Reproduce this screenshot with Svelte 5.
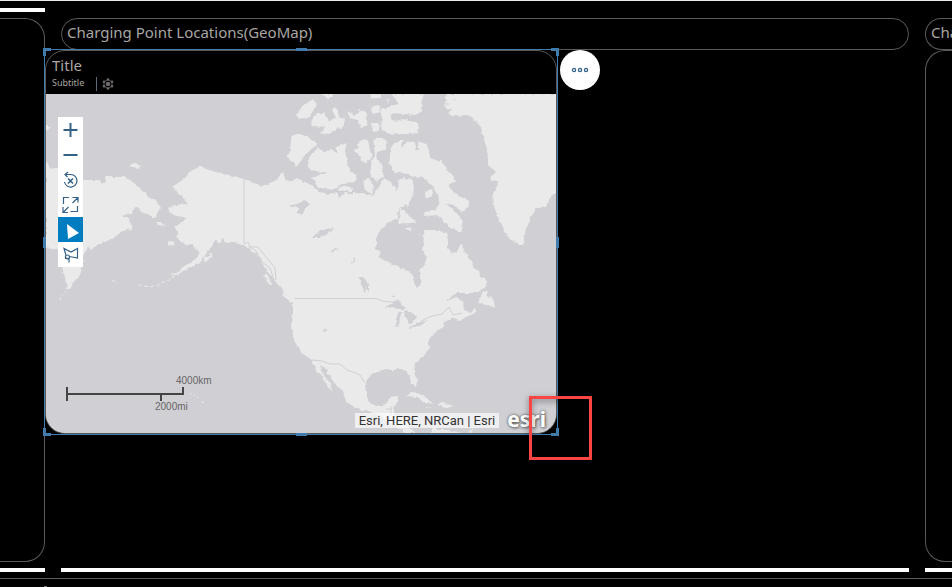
<script>
  let tool = $state('select');
  const handles = ['nw', 'n', 'ne', 'w', 'e', 'sw', 's', 'se'];
</script>

<div class="page">
  <main class="board">
    <section class="lane left" aria-label="Previous lane">
      <div class="bar"></div>
      <div class="panel"></div>
    </section>

    <section class="lane middle">
      <h1 class="pill">Charging Point Locations(GeoMap)</h1>
      <article class="selection">
        <div class="card">
          <header>
            <h2>Title</h2>
            <div class="sub">
              <span>Subtitle</span>
              <i class="rule"></i>
              <svg width="12" height="12" viewBox="0 0 12 12" fill="#6c6a69">
                <path d="M6 1.500 10 3.800v4.500L6 10.500 2 8.300V3.800Z" fill="none" stroke="#5a5857" />
                <circle cx="6" cy="6" r="2.300" /><circle cx="6" cy="1.500" r="1.300" /><circle cx="6" cy="10.500" r="1.300" />
                <circle cx="2" cy="3.700" r="1.300" /><circle cx="10" cy="3.700" r="1.300" />
                <circle cx="2" cy="8.300" r="1.300" /><circle cx="10" cy="8.300" r="1.300" />
              </svg>
            </div>
          </header>
          <div class="map">
            <svg class="world" viewBox="46 94 510 339" preserveAspectRatio="xMinYMin slice" role="img" aria-label="Map of North America">
              <defs>
                <filter id="coast" x="0" y="0" width="100%" height="100%">
                  <feTurbulence type="fractalNoise" baseFrequency=".2" numOctaves="2" seed="4" />
                  <feDisplacementMap in="SourceGraphic" scale="4" xChannelSelector="R" yChannelSelector="G" />
                </filter>
              </defs>
              <g filter="url(#coast)">
                <rect x="36" y="84" width="530" height="359" fill="#d0cfd4" />
                <g fill="#eaeaea">
                  <!-- mainland -->
                  <path d="M244 179 230 175 223 174 213 171 206 169 201 166 197 168 190 172 186 177 181 181 172 187 177 191 178 194 184 197 185 202 188 204 175 205 168 209 173 215 182 217 187 218 180 223 174 227 178 232 176 237 182 243 187 245 192 244 196 250 200 252 196 259 190 263 180 270 170 276 178 274 188 269 200 262 206 254 212 246 216 239 218 243 222 239 227 242 234 243 244 245 253 251 261 258 264 267 270 275 276 281 282 290 288 296 293 302 293 313 292 323 293 337 298 347 303 354 312 360 315 368 321 375 327 385 333 392 330 383 325 377 321 371 320 365 325 368 328 375 334 382 340 388 344 394 346 402 355 407 368 412 380 415 387 422 398 426 404 433H416L410 428 407 420 400 417 394 416 394 408 397 402 398 396 391 397 387 401 384 405 376 406 371 404 368 400 367 393 366 383 370 375 377 371 387 369 391 370 400 369 407 371 409 376 412 384 416 386 417 381 414 372 415 363 423 357 430 348 428 341 432 335 437 331 443 327 444 322 452 319 462 317 470 313 464 310 463 302 456 297 446 302 440 310 446 303 450 297 457 293 476 293 484 289 487 283 485 278 480 276 479 271 473 265 470 260 467 255 464 250 461 243 457 252 452 253 448 248 448 240 446 233 438 230 423 230 424 242 422 250 427 258 424 266 420 270 420 277 422 283 417 288 413 281 412 272 400 268 392 264 387 261 380 258 379 251 376 248 376 239 380 230 388 223 397 218 400 207 404 206 412 190 404 178 398 180 397 190 391 183 384 178 379 187 373 196 363 193 345 193 340 198 337 193 328 194 318 193 313 186 305 182 297 178 290 182 286 180 282 172 277 180 262 186 257 184Z" />
                  <!-- siberia and kamchatka -->
                  <path d="M46 162 51 168 58 169 67 176 83 180 99 180 102 184 106 182 105 176 111 177 124 177 130 180 139 187 147 194 149 199 155 199 158 204 161 207 157 213 156 218 148 215 139 209 135 207 132 214 123 215 130 220 132 229 122 231 114 238 105 242 98 244 92 250 88 247 83 256 82 267 80 275 75 281 70 289 67 289 65 278 62 267 64 255 58 250 46 248Z" />
                  <path d="M128 167 134 163 140 165 139 169ZM46 125 50 128 46 131ZM156 223 162 223 165 226 158 225Z" />
                  <!-- greenland -->
                  <path d="M446 94H560V191L552 195 545 206 536 209 531 217 526 229 523 245 518 245 514 241 508 238 502 226 497 217 494 206 493 193 497 189 498 181 492 182 490 177 496 172 488 165 488 156 485 143 481 127 473 119 467 115 455 116 448 114 452 110 443 106 451 104 456 99 446 98Z" />
                  <!-- newfoundland and nova scotia -->
                  <path d="M483 291 488 290 486 296 492 298 494 302 495 309 490 306 482 304 478 303ZM457 320 458 316 465 313 473 311 475 308 475 313 466 317 460 321Z" />
                  <!-- caribbean -->
                  <path d="M406 396 412 392 420 394 430 401 433 404 423 402 418 397ZM437 405 442 402 453 406 448 408 443 407ZM426 406 431 407 427 408Z" />
                  <path d="M430 433 434 427 439 430 449 430 462 433ZM469 433 474 427 471 433Z" />
                </g>
                <!-- arctic islands -->
                <g transform="translate(230 90) scale(.3333)" fill="#eaeaea">
                  <path d="M185 135 210 132 235 142 262 165 235 185 218 205 200 230 190 215 172 205 180 180Z" />
                  <path d="M262 170 280 183 305 180 322 190 320 170 350 160 345 180 352 220 360 240 382 258 378 272 330 285 305 300 285 293 265 295 245 262 290 248 240 240 232 210Z" />
                  <path d="M197 75 220 45 250 28 260 45 235 85 210 85ZM243 90 260 68 285 70 298 95 315 80 305 60 318 52 328 80 345 88 340 110 305 125 285 133 270 130 285 110 245 108ZM275 12H305V25L290 28ZM340 12 352 40 345 25ZM352 65 375 78 388 58 410 65 412 105 392 115 385 90 360 85Z" />
                  <path d="M370 180 385 175 385 155 400 148 415 155 420 180 425 200 410 222 395 210 385 195ZM430 150 455 143 475 155 465 180 445 185 440 205 455 225 460 260 440 272 420 255 425 215 435 195ZM420 50 445 45 450 65 430 72ZM425 100 445 98 448 122 425 122ZM425 12H450V25H425ZM400 275 412 262 428 275 428 315 405 300ZM455 60 480 65 485 90 510 95V130L465 130 455 100Z" />
                  <path d="M320 295 345 287 370 295 365 303 330 305Z" />
                </g>
                <g transform="translate(380 90) scale(.3333)" fill="#eaeaea">
                  <path d="M35 12H130L125 65 105 75 50 70 5 75 0 60 30 52 55 40ZM15 25 28 25 25 38ZM5 85 30 95 70 88 115 100 112 130 65 133 20 130 8 120Z" />
                  <path d="M32 175 45 155 70 152 60 185 70 205 75 215 62 200 62 175 80 155 105 155 108 180 118 180 112 155 135 160 146 178 150 205 185 215 200 238 218 255 225 275 205 285 225 310 268 332 265 355 245 365 225 345 195 340 235 375 248 400 240 428 220 415 195 400 175 375 130 378 135 365 165 362 178 340 175 315 150 280 125 262 100 262 80 248 45 250 28 220Z" />
                  <circle cx="147" cy="312" r="12" />
                  <path d="M65 272 95 265 102 280 100 320 80 350 65 330ZM62 350 85 375 110 395 85 400 55 400ZM78 415 95 412 92 425ZM115 425 120 433 116 437ZM195 12 230 15 218 28 235 32 225 55 205 42 190 45 205 32Z" />
                </g>
                <!-- lakes -->
                <g fill="#d0cfd4">
                  <path d="M289 206 300 203 304 200 307 202 310 204 305 209 302 214 295 213 300 208ZM312 238 320 230 327 230 334 227 327 234 319 238ZM329 252 334 248 339 249 333 251ZM352 263 355 257 355 260 352 264ZM359 276 363 276 369 285 369 291 366 287 365 293 361 285ZM323 329 326 330 326 333ZM391 296 394 294 394 297Z" />
                  <path d="M384 308 392 303 397 299 401 303 406 309 399 309 392 307ZM396 326 396 316 399 312 404 312 400 316 399 327ZM404 311 411 312 417 317 413 322 409 324 405 317ZM408 328 414 325 421 322 428 320 421 325 411 329Z" />
                  <path d="M415 262 420 261 420 267ZM320 366 325 368 330 377 324 374Z" />
                </g>
                <!-- pacific chains -->
                <g fill="none" stroke="#eaeaea" stroke-width="1">
                  <path d="M112 280 118 283M138 285 150 287 160 284 168 280 178 275" stroke-dasharray="4 2" />
                  <path d="M60 300 67 290M190 393 200 399M203 401 204 404" stroke-dasharray="2 2" />
                  <path d="M204 260 212 255M169 244 174 243M282 293 292 301M265 275 271 284" stroke-width="3" />
                </g>
              </g>
              <!-- borders -->
              <g fill="none" stroke="#d0cfd4">
                <path d="M244 179V244L248 242 251 247 258 247 266 257 275 268 276 280M248 246 256 251 262 262 270 268 274 280M295 298.500H376L383 301 390 302 397 302" />
                <path d="M312 360 322 361 330 364 340 364 347 370 353 372 360 375 365 383M386 409H392M391 406V416M421 321 432 316 442 314 449 307 453 315 462 313" />
              </g>
            </svg>

            <div class="tools" role="toolbar" aria-label="Map tools">
              <button aria-label="Zoom in"><svg viewBox="0 0 25 25"><path d="M12.500 6v14M5.500 13h14" stroke-width="2" /></svg></button>
              <button aria-label="Zoom out"><svg viewBox="0 0 25 25"><path d="M5.500 13h14" stroke-width="2" /></svg></button>
              <button aria-label="Reset"><svg viewBox="0 0 25 25"><path d="M7.500 7.500H13A6.300 6.300 0 1 1 6.500 15M10 5 7 7.500l2.500 2.500" /><path d="m10 11.500 5 5M15 11.500l-5 5" stroke-width="1.600" /></svg></button>
              <button aria-label="Full screen"><svg viewBox="0 0 25 25"><path d="M5.500 12V5.500H11M19.500 14v5.500h-7M14.500 5.500h5.500v5M20 5.500l-5.500 5.500M5 15v5.500h5M5 20.500l5.500-5.500" /></svg></button>
              <button class:active={tool === 'select'} aria-label="Select" onclick={() => (tool = 'select')}><svg viewBox="0 0 25 25"><path class="arrow" d="M9 7 21 16 10 22Z" /></svg></button>
              <button class:active={tool === 'lasso'} aria-label="Lasso" onclick={() => (tool = 'lasso')}><svg viewBox="0 0 25 25"><path d="M8 13.500 6 6.500l7 3.500 6.500-3.500v9.500l-8-1.500" /><circle cx="9.500" cy="15" r="2" /><path d="M7 16.500c4-1 4.500 1 4 4" /></svg></button>
            </div>

            <div class="scale">
              <span class="km">4000km</span>
              <svg width="118" height="14" viewBox="0 0 118 14"><path d="M1 0v14M0 7h118M117 0v7M95 7v7" fill="none" stroke="#444" stroke-width="2" /></svg>
              <span class="mi">2000mi</span>
            </div>
            <div class="credits">
              <span class="source">Esri, HERE, NRCan | Esri</span>
              <span class="logo">esri</span>
            </div>
          </div>
        </div>
        {#each handles as h}<i class="handle {h}"></i>{/each}
        <button class="more" aria-label="More actions">
          <svg width="18" height="6" viewBox="0 0 18 6" fill="none" stroke="#346187" stroke-width="1.300"><circle cx="3" cy="3" r="1.600" /><circle cx="9" cy="3" r="1.600" /><circle cx="15" cy="3" r="1.600" /></svg>
        </button>
        <div class="marker"></div>
      </article>
    </section>

    <section class="lane right">
      <h1 class="pill">Cha</h1>
      <div class="panel"></div>
    </section>
  </main>
  <footer>
    <div class="bars"><i></i><i></i><i></i></div>
    <div class="line"><i></i></div>
  </footer>
</div>

<style>
  :global(body) { margin: 0; background: #000; }
  * { box-sizing: border-box; }
  .page {
    display: flex; flex-direction: column; min-height: 100vh; overflow: hidden;
    background: #000; border-top: 1px solid #e8eef0; color: #a9a6a3;
    font-family: "Noto Sans", "Open Sans", sans-serif;
  }
  .board, .bars { display: grid; grid-template-columns: 45px minmax(0, 1fr) 27px; column-gap: 16px; }
  .board { flex: 1; }
  .lane { display: flex; flex-direction: column; min-width: 0; padding-top: 17px; }
  .left { padding-top: 7px; }
  .bar { height: 4px; background: #fff; margin-bottom: 6px; }
  .panel { flex: 1; border: 1px solid #5a5a5a; }
  .left .panel { border-left: 0; border-radius: 0 20px 20px 0; }
  .right .panel { border-right: 0; border-radius: 20px 0 0 20px; }
  .pill {
    height: 32px; flex: none; margin: 0; padding: 0 5px; border: 1px solid #5a5a5a; border-radius: 16px;
    font-size: 15px; font-weight: 400; line-height: 27px; white-space: nowrap; overflow: hidden;
  }
  .right .pill { padding-right: 0; border-right: 0; border-radius: 16px 0 0 16px; }
  .selection { position: relative; width: 514px; margin: -1px 0 0 -17px; border: 1px solid #427cac; }
  .card { border: 1px solid #5a5a5a; border-radius: 20px; overflow: hidden; background: #000; }
  header { height: 43px; padding: 4px 6px 0; }
  h2 { margin: 0; font-size: 15px; line-height: 20px; font-weight: 400; }
  .sub { display: flex; align-items: center; height: 18px; font-size: 9px; line-height: 12px; }
  .sub span { padding-bottom: 2px; }
  .rule { width: 1px; height: 14px; margin: 0 5px 0 12px; background: #5b6b78; }
  .map { position: relative; aspect-ratio: 510 / 339; background: #d0cfd4; }
  .world { display: block; width: 100%; height: 100%; }
  .tools { position: absolute; left: 12px; top: 23px; display: flex; flex-direction: column; background: #fff; }
  .tools button { width: 25px; height: 25px; padding: 0; border: 0; background: #fff; }
  .tools svg { display: block; width: 25px; height: 25px; fill: none; stroke: #346187; stroke-width: 1.2; }
  .tools .active { background: #007dc1; }
  .tools .arrow { fill: #fff; stroke: none; }
  .tools .active path:not(.arrow), .tools .active circle { stroke: #fff; }
  .scale {
    position: absolute; left: 20px; bottom: 20px; display: flex; flex-direction: column;
    font: 10px/12px "Liberation Sans", sans-serif; color: #666;
  }
  .scale svg { display: block; }
  .km { margin-left: 110px; }
  .mi { margin-left: 89px; }
  .credits { position: absolute; right: 10px; bottom: 0; display: flex; align-items: flex-end; gap: 8px; }
  .source { margin-bottom: 5px; padding: 0 4px; font: 13px/15px Roboto, sans-serif; color: #333; background: rgba(255, 255, 255, .65); }
  .logo { font-size: 21px; line-height: 28px; font-weight: 700; color: #fff; text-shadow: 0 0 3px #555, 1px 1px 3px #777; }
  .handle { position: absolute; border: 0 solid #427cac; width: 8px; height: 8px; }
  .nw, .n, .ne { top: -2px; }
  .sw, .s, .se { bottom: -2px; }
  .nw, .w, .sw { left: -2px; }
  .ne, .e, .se { right: -2px; }
  .nw, .n, .ne { border-top-width: 3px; }
  .sw, .s, .se { border-bottom-width: 3px; }
  .nw, .w, .sw { border-left-width: 3px; }
  .ne, .e, .se { border-right-width: 3px; }
  .n, .s { left: calc(50% - 5px); width: 11px; height: 3px; }
  .e, .w { top: calc(50% - 5px); height: 11px; width: 3px; }
  .more {
    position: absolute; left: calc(100% + 3px); top: 0; width: 40px; height: 40px; padding: 0;
    display: flex; align-items: center; justify-content: center; border: 0; border-radius: 50%; background: #fff;
  }
  .marker { position: absolute; right: -35px; bottom: -26px; width: 63px; height: 64px; border: 3px solid #fb4444; filter: drop-shadow(0 2px 3px rgba(0, 0, 0, .5)); }
  footer { padding-top: 6px; }
  .bars i { height: 4px; background: #fff; }
  .line { display: flex; align-items: flex-end; height: 9px; margin-top: 6px; border-top: 1px solid #5a5a5a; }
  .line i { width: 3px; height: 1px; margin-left: 44px; background: #777; }
</style>
